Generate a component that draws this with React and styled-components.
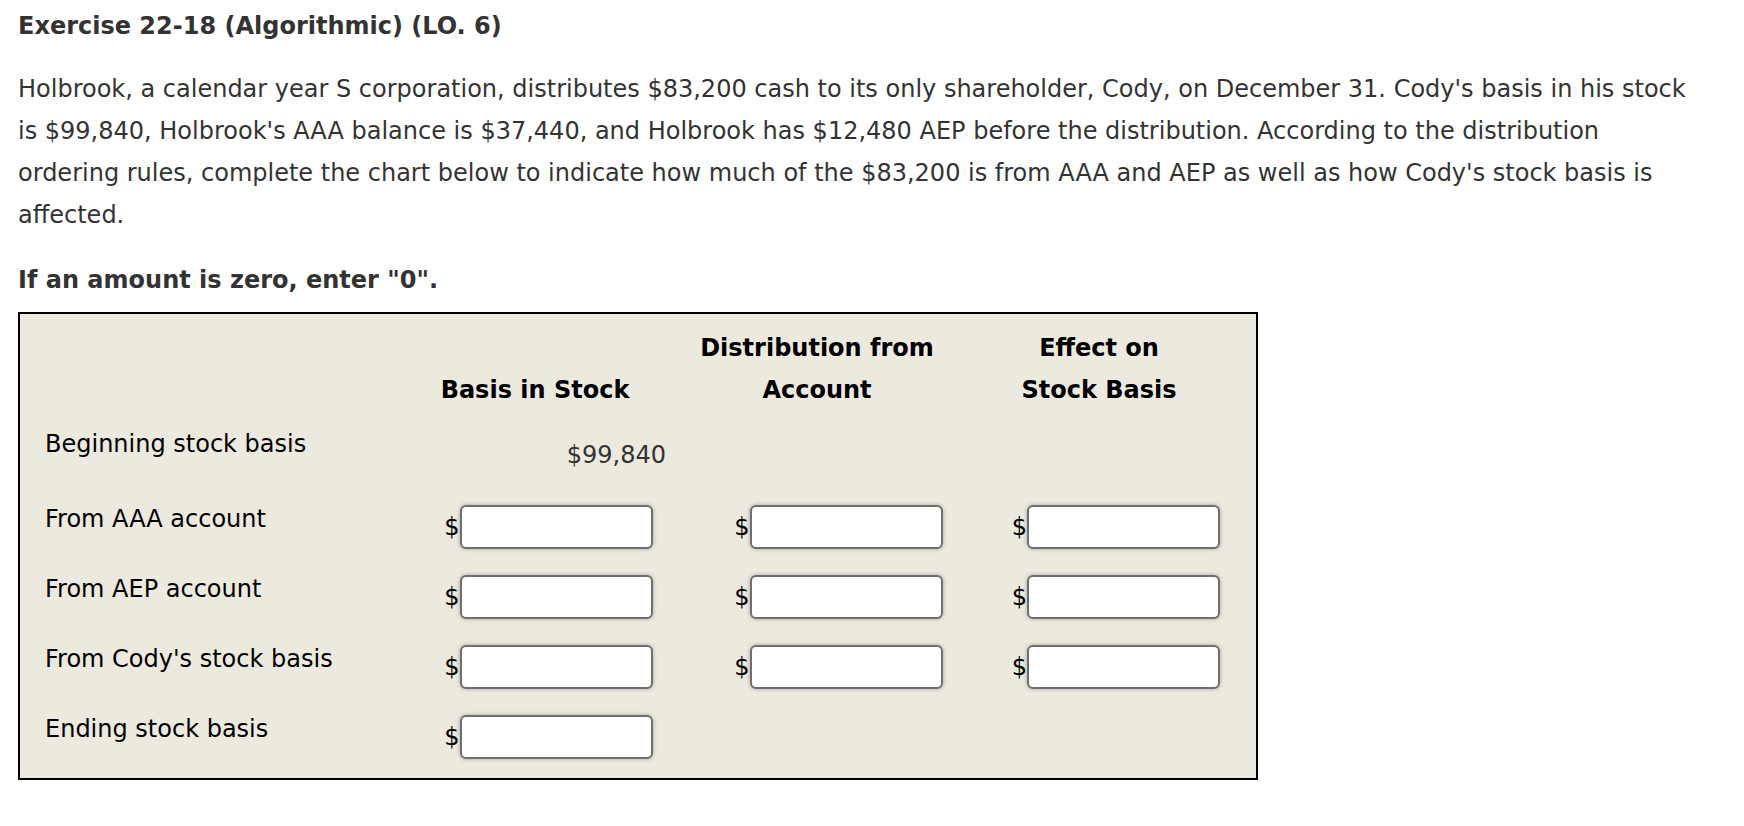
import React from "react"
import styled, { createGlobalStyle } from "styled-components"

const GlobalStyle = createGlobalStyle`
  html, body {
    margin: 0;
    padding: 0;
    background: #fff;
  }
  body {
    font-family: "DejaVu Sans", Verdana, sans-serif;
    color: #333;
  }
`

const Page = styled.div`
  padding: 12px 40px 40px 18px;
  font-size: 24px;
`

const Title = styled.h1`
  margin: 0;
  font-size: 24px;
  line-height: 28px;
  font-weight: bold;
  color: #333;
`

const Prompt = styled.p`
  margin: 28px 0 0;
  line-height: 42px;
`

const Note = styled.p`
  margin: 23px 0 0;
  line-height: 42px;
  font-weight: bold;
`

const Chart = styled.div`
  box-sizing: border-box;
  width: 1240px;
  margin-top: 11px;
  padding: 13px 0 19px;
  border: 2px solid #000;
  background: #eceadf;
  color: #000;
`

const Row = styled.div`
  display: grid;
  grid-template-columns: 374px 282px 282px 282px;
  align-items: start;
  margin-top: ${(p) => p.$gap || 0}px;
  min-height: ${(p) => p.$min || 0}px;
`

const Head = styled.div`
  align-self: end;
  text-align: center;
  font-weight: bold;
  line-height: 42px;
`

const Label = styled.div`
  padding-left: 25px;
  line-height: 28px;
`

const Value = styled.div`
  padding: 11px 10px 0 0;
  text-align: right;
  line-height: 28px;
  color: #333;
`

const Field = styled.label`
  display: flex;
  align-items: baseline;
  justify-content: center;
  padding-left: ${(p) => p.$pad}px;
`

const Dollar = styled.span`
  line-height: 28px;
`

const Input = styled.input`
  box-sizing: border-box;
  width: 193px;
  height: 44px;
  padding: 0 8px;
  border: 2px solid #6f6f6f;
  border-radius: 6px;
  background: #fff;
  box-shadow: 0 0 4px rgba(0, 0, 0, 0.3);
  font-family: "DejaVu Sans", Verdana, sans-serif;
  font-size: 24px;
  outline: none;
`

const columnPad = [27, 43, 34]

const rows = [
  { label: "From AAA account", cols: 3 },
  { label: "From AEP account", cols: 3 },
  { label: "From Cody's stock basis", cols: 3 },
  { label: "Ending stock basis", cols: 1 },
]

export default function App() {
  return (
    <>
      <GlobalStyle />
      <Page>
        <Title>Exercise 22-18 (Algorithmic) (LO. 6)</Title>
        <Prompt>
          Holbrook, a calendar year S corporation, distributes $83,200 cash to its only
          shareholder, Cody, on December 31. Cody's basis in his stock is $99,840,
          Holbrook's AAA balance is $37,440, and Holbrook has $12,480 AEP before the
          distribution. According to the distribution ordering rules, complete the chart
          below to indicate how much of the $83,200 is from AAA and AEP as well as how
          Cody's stock basis is affected.
        </Prompt>
        <Note>If an amount is zero, enter "0".</Note>

        <Chart>
          <Row $min={84}>
            <div />
            <Head>Basis in Stock</Head>
            <Head>
              Distribution from
              <br />
              Account
            </Head>
            <Head>
              Effect on
              <br />
              Stock Basis
            </Head>
          </Row>

          <Row $gap={19} $min={75}>
            <Label>Beginning stock basis</Label>
            <Value>$99,840</Value>
          </Row>

          {rows.map((r, i) => (
            <Row key={r.label} $gap={i === 0 ? 0 : 26}>
              <Label>{r.label}</Label>
              {Array.from({ length: r.cols }).map((_, c) => (
                <Field key={c} $pad={columnPad[c]}>
                  <Dollar>$</Dollar>
                  <Input type="text" />
                </Field>
              ))}
            </Row>
          ))}
        </Chart>
      </Page>
    </>
  )
}
